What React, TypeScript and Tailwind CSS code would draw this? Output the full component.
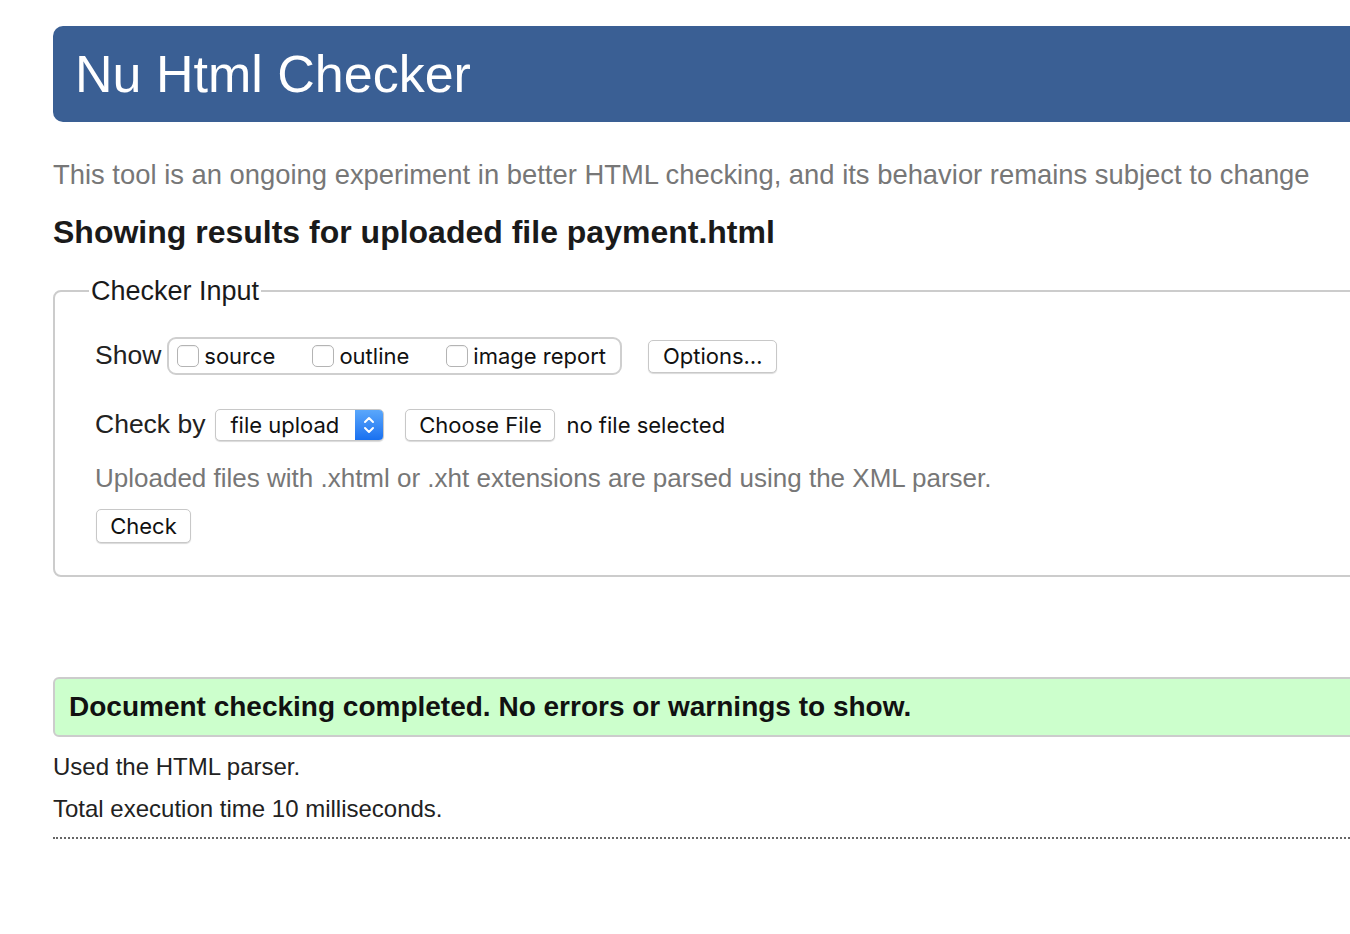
import { useState } from "react";

function Box({ checked, onClick }: { checked: boolean; onClick: () => void }) {
    return (
        <span
            onClick={onClick}
            className={`inline-block w-[22px] h-[22px] rounded-[5px] border border-[#b4b4b4] bg-white shadow-[inset_0_1px_1px_rgba(0,0,0,0.06)] ${checked ? "bg-[#1a73f0]" : ""}`}
        />
    );
}

function Button({ children, className = "" }: { children: React.ReactNode; className?: string }) {
    return (
        <button
            className={`bg-white border border-[#c8c8c8] rounded-[5px] shadow-[0_1px_1px_rgba(0,0,0,0.15)] text-[22px] text-[#111] leading-none ${className}`}
        >
            {children}
        </button>
    );
}

export default function App() {
    const [show, setShow] = useState({ source: false, outline: false, image: false });
    const toggle = (k: "source" | "outline" | "image") => setShow({ ...show, [k]: !show[k] });

    return (
        <div className="w-[1350px] h-[934px] overflow-hidden bg-white font-['Liberation_Sans',Arial,sans-serif] text-[#222]">
            <div className="w-[1420px] ml-[53px] pt-[26px]">
                <header className="h-[96px] bg-[#3a5f94] rounded-l-[10px] pl-[22px] flex items-center">
                    <h1 className="text-white text-[52px] leading-none">Nu Html Checker</h1>
                </header>

                <p className="mt-[37px] text-[27.4px] leading-[32px] text-[#777]">
                    This tool is an ongoing experiment in better HTML checking, and its behavior remains subject to change
                </p>
                <h2 className="mt-[23px] text-[32px] leading-[36px] font-bold text-[#1a1a1a]">
                    Showing results for uploaded file payment.html
                </h2>

                <fieldset className="mt-[26px] border-2 border-[#cccccc] rounded-[8px] pl-[40px] pb-[32px]">
                    <legend className="-ml-[6px] px-[2px] text-[27px] leading-[30px] text-[#1a1a1a]">Checker Input</legend>

                    <div className="mt-[31px] flex items-center h-[38px]">
                        <span className="text-[26.5px] mr-[6px]">Show</span>
                        <div className="h-[38px] w-[455px] border-2 border-[#cfcfcf] rounded-[9px] flex items-center pl-[8px] text-[22px] font-['Inter',sans-serif] text-[#111]">
                            <label className="flex items-center gap-[5px]">
                                <Box checked={show.source} onClick={() => toggle("source")} />
                                <span>source</span>
                            </label>
                            <label className="flex items-center gap-[5px] ml-[37px]">
                                <Box checked={show.outline} onClick={() => toggle("outline")} />
                                <span>outline</span>
                            </label>
                            <label className="flex items-center gap-[5px] ml-[37px]">
                                <Box checked={show.image} onClick={() => toggle("image")} />
                                <span>image report</span>
                            </label>
                        </div>
                        <Button className="ml-[26px] w-[129px] h-[33px] font-['Inter',sans-serif]">Options…</Button>
                    </div>

                    <div className="mt-[33px] flex items-center h-[34px]">
                        <span className="text-[26.5px] mr-[10px]">Check by</span>
                        <div className="w-[169px] h-[32px] border border-[#c8c8c8] rounded-[5px] shadow-[0_1px_1px_rgba(0,0,0,0.15)] flex overflow-hidden bg-white">
                            <span className="flex-1 pl-[14px] flex items-center text-[22px] font-['Inter',sans-serif] text-[#111]">file upload</span>
                            <span className="w-[28px] bg-gradient-to-b from-[#5aa7fb] to-[#1870f0] flex items-center justify-center">
                                <svg width="12" height="20" viewBox="0 0 12 20" fill="none" stroke="white" strokeWidth="2" strokeLinecap="round" strokeLinejoin="round">
                                    <path d="M2 7 L6 3 L10 7" />
                                    <path d="M2 13 L6 17 L10 13" />
                                </svg>
                            </span>
                        </div>
                        <Button className="ml-[21px] w-[150px] h-[32px] font-['Inter',sans-serif]">Choose File</Button>
                        <span className="ml-[11px] text-[22px] font-['Inter',sans-serif] text-[#111]">no file selected</span>
                    </div>

                    <p className="mt-[21px] text-[26px] leading-[30px] text-[#777]">
                        Uploaded files with .xhtml or .xht extensions are parsed using the XML parser.
                    </p>

                    <Button className="mt-[16px] ml-[1px] w-[95px] h-[34px] font-['Inter',sans-serif]">Check</Button>
                </fieldset>

                <div className="mt-[100px] h-[60px] bg-[#ccffcc] border-2 border-[#cccccc] rounded-l-[6px] pl-[14px] flex items-center">
                    <p className="text-[28px] font-bold text-[#111]">Document checking completed. No errors or warnings to show.</p>
                </div>

                <p className="mt-[16px] text-[24px] leading-[28px]">Used the HTML parser.</p>
                <p className="mt-[14px] text-[24px] leading-[28px]">Total execution time 10 milliseconds.</p>
                <div className="mt-[14px] border-b-2 border-dotted border-[#666]" />
            </div>
        </div>
    );
}
